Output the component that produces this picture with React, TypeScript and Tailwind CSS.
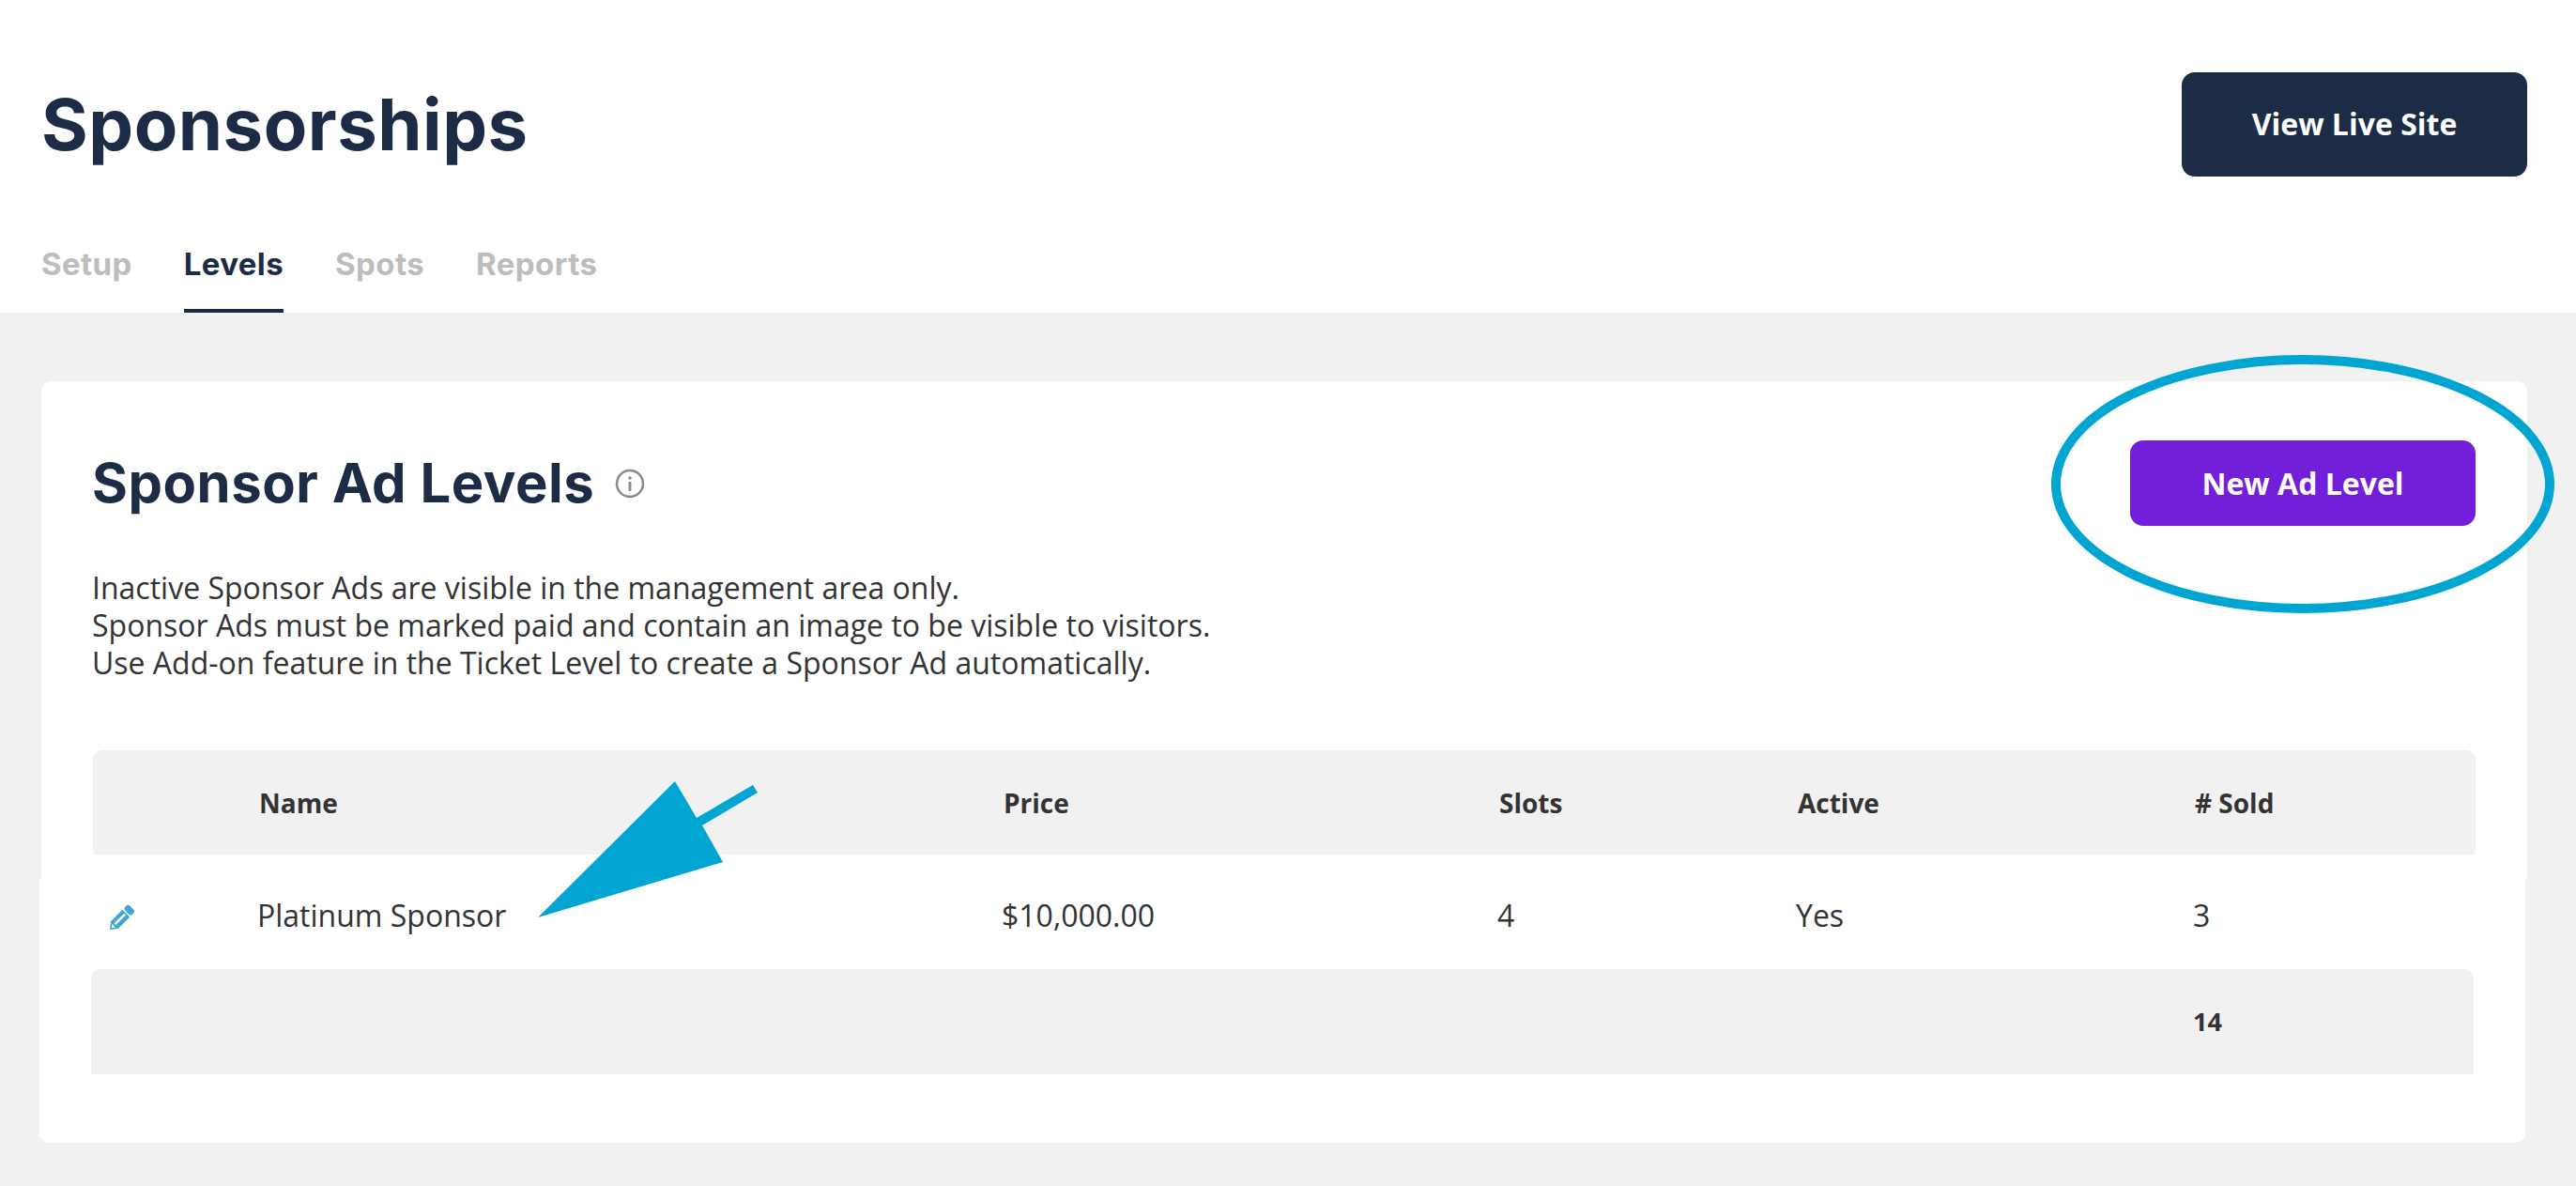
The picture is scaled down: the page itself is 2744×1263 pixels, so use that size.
const COLS = "grid grid-cols-[177px_793px_528px_318px_423px_299px] items-center";

const InfoIcon = () => (
  <svg width="32" height="32" viewBox="0 0 32 32" fill="none">
    <circle cx="16" cy="16" r="14" stroke="#8a8a8a" strokeWidth="2.5" />
    <circle cx="16" cy="10" r="1.8" fill="#8a8a8a" />
    <rect x="14.6" y="14" width="2.8" height="10" fill="#8a8a8a" />
  </svg>
);

const PencilIcon = () => (
  <svg width="36" height="36" viewBox="0 0 36 36" className="block">
    <g transform="translate(2 33) rotate(-45)" fill="#42a5d0">
      <path d="M0 0 L7 -5.5 H24.5 V5.5 H7 Z" />
      <rect x="26" y="-5.5" width="7" height="11" rx="2.5" />
      <rect x="8" y="-1.5" width="15" height="2.6" fill="#fff" />
      <path d="M2.5 0 L6 -2.6 V2.6 Z" fill="#fff" />
    </g>
  </svg>
);

const Annotations = () => (
  <svg
    className="pointer-events-none absolute top-0 left-0"
    width="2744"
    height="1263"
    viewBox="0 0 2744 1263"
  >
    <ellipse
      cx="2453"
      cy="515.5"
      rx="263"
      ry="132.5"
      fill="none"
      stroke="#00a5d2"
      strokeWidth="10"
    />
    <polygon
      points="573,977 719,832 742,871 802,836 807,844 748,879 770,918"
      fill="#00a5d2"
    />
  </svg>
);

export default function App() {
  return (
    <div className="relative h-[1263px] w-[2744px] overflow-hidden bg-[#f1f1f1] font-['Open_Sans',sans-serif] text-[#333]">
      <header className="flex h-[333px] flex-col justify-between bg-white pt-[77px] pr-[52px] pl-[44px]">
        <div className="flex items-start justify-between">
          <h1 className="font-['Inter',sans-serif] text-[76px] leading-[111px] font-bold tracking-[0.5px] text-[#1c2b46]">
            Sponsorships
          </h1>
          <button className="h-[111px] w-[368px] rounded-[14px] bg-[#1c2b46] pb-[2px] text-[32px] font-bold text-white">
            View Live Site
          </button>
        </div>
        <nav className="flex gap-[55px] font-['Inter',sans-serif] text-[33px] font-bold tracking-[0.4px] text-[#bdbdbd]">
          <a className="pb-[30px] leading-[44px]">Setup</a>
          <a className="border-b-4 border-[#1c2b46] pb-[26px] leading-[44px] text-[#1c2b46]">Levels</a>
          <a className="pb-[30px] leading-[44px]">Spots</a>
          <a className="pb-[30px] leading-[44px]">Reports</a>
        </nav>
      </header>

      <main className="pt-[73px]">
        <section className="ml-[44px] h-[531px] w-[2648px] rounded-t-[10px] bg-white px-[55px] pt-[63px]">
          <div className="flex h-[91px] items-center justify-between">
            <div className="flex items-center gap-[22px]">
              <h2 className="-ml-[1px] font-['Inter',sans-serif] text-[58px] font-bold tracking-[0.5px] text-[#1c2b46]">
                Sponsor Ad Levels
              </h2>
              <InfoIcon />
            </div>
            <button className="h-[91px] w-[368px] rounded-[14px] bg-[#721fd9] text-[32px] font-bold text-white">
              New Ad Level
            </button>
          </div>
          <p className="mt-[46px] -ml-[1px] text-[32px] leading-[40px]">
            Inactive Sponsor Ads are visible in the management area only.
            <br />
            Sponsor Ads must be marked paid and contain an image to be visible to visitors.
            <br />
            Use Add-on feature in the Ticket Level to create a Sponsor Ad automatically.
          </p>
          <div className={`${COLS} mt-[73px] h-[111px] rounded-t-[10px] bg-[#f1f1f1] text-[28px] font-bold`}>
            <div />
            <div>Name</div>
            <div>Price</div>
            <div>Slots</div>
            <div>Active</div>
            <div># Sold</div>
          </div>
        </section>

        <section className="ml-[42px] w-[2648px] rounded-b-[10px] bg-white px-[55px] pb-[73px]">
          <div className={`${COLS} h-[76px] text-[32px]`}>
            <div className="pl-[18px]">
              <PencilIcon />
            </div>
            <div>Platinum Sponsor</div>
            <div>$10,000.00</div>
            <div>4</div>
            <div>Yes</div>
            <div>3</div>
          </div>
          <div className={`${COLS} mt-[19px] h-[112px] rounded-t-[10px] bg-[#f1f1f1] text-[27px] font-bold`}>
            <div />
            <div />
            <div />
            <div />
            <div />
            <div>14</div>
          </div>
        </section>
      </main>

      <Annotations />
    </div>
  );
}
